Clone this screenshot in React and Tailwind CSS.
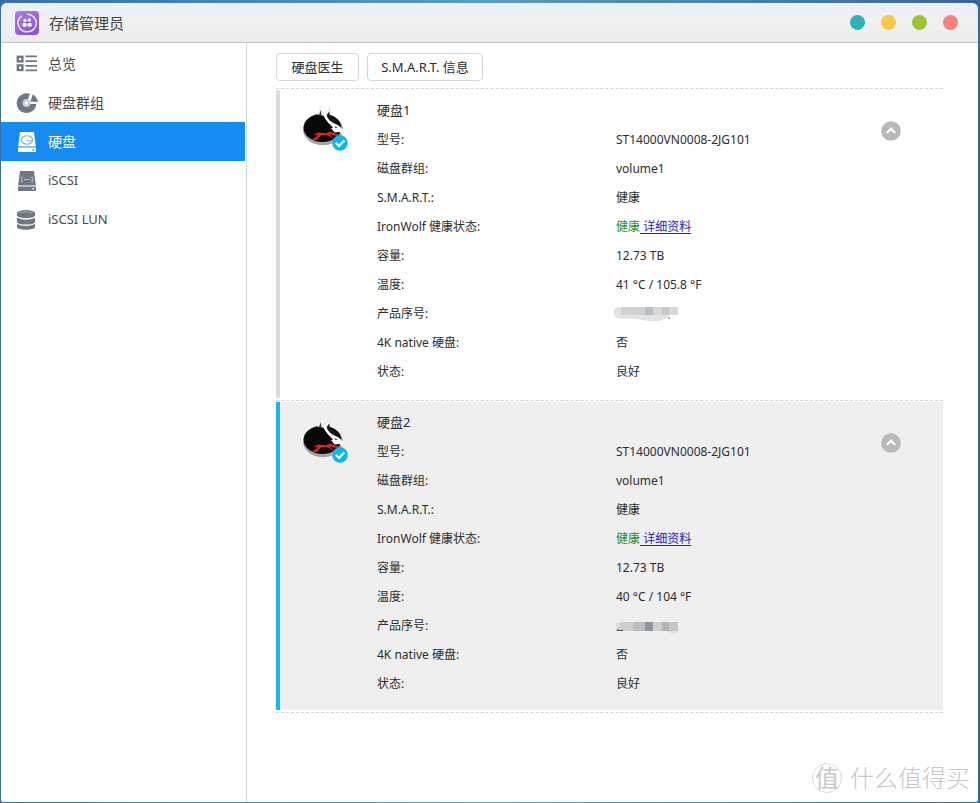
import React from "react";

const disks = [
  { name: "硬盘1", temperature: "41 °C / 105.8 °F", selected: false },
  { name: "硬盘2", temperature: "40 °C / 104 °F", selected: true },
];

function AppLogo() {
  return (
    <svg viewBox="0 0 24 24" className="size-6 shrink-0" aria-hidden="true">
      <defs>
        <linearGradient id="logo" x1="0" y1="0" x2="0.6" y2="1">
          <stop offset="0" stopColor="#b07be6" />
          <stop offset="1" stopColor="#8558d8" />
        </linearGradient>
      </defs>
      <rect width="24" height="24" rx="4" fill="url(#logo)" />
      <path d="M13 3.2 A8.8 8.8 0 0 1 12 20.8 A8.8 8.8 0 0 1 6.4 5.2" fill="none" stroke="#f1e4fd" strokeWidth="1.5" strokeLinecap="round" />
      <circle cx="10" cy="9.4" r="1.7" fill="#fff" />
      <circle cx="14.4" cy="9" r="1.7" fill="#fff" />
      <rect x="7.6" y="12" width="4" height="3.8" rx="1.2" fill="#fff" />
      <rect x="12.6" y="12" width="4" height="3.8" rx="1.2" fill="#fff" />
    </svg>
  );
}

function OverviewIcon() {
  return (
    <svg viewBox="0 0 22 20" className="w-[22px] h-5" fill="none" stroke="#6f7785" aria-hidden="true">
      <rect x="1.8" y="2.8" width="4.6" height="4.6" strokeWidth="2.4" />
      <rect x="1.8" y="11.4" width="4.6" height="4.6" strokeWidth="2.4" />
      <path d="M9.5 2.4H21M9.5 7.2H21M9.5 11.8H21M9.5 16.4H21" strokeWidth="1.7" />
    </svg>
  );
}

function GroupIcon() {
  return (
    <svg viewBox="0 0 22 20" className="w-[22px] h-5" aria-hidden="true">
      <path d="M14 1A9.8 9.8 0 1 0 20.3 11H14.2L11.8 6.2Z" fill="#6f7785" />
      <circle cx="10.4" cy="10" r="3.9" fill="#c9ccd1" />
      <circle cx="10.4" cy="10" r="1.7" fill="#fff" />
      <path d="M16.8 1.2 Q20.8 3.8 22 9 L14.4 8.4Z" fill="#6f7785" />
    </svg>
  );
}

function DiskIcon() {
  return (
    <svg viewBox="0 0 22 20" className="w-[22px] h-5" aria-hidden="true">
      <path d="M4 0H18L19.8 14.6H2.2Z" fill="#fff" />
      <rect x="2" y="15.6" width="18" height="4.4" rx=".6" fill="#fff" />
      <ellipse cx="11" cy="8" rx="5.6" ry="4.2" fill="none" stroke="#6db4f5" strokeWidth="1.1" />
      <path d="M11 8.8h5" stroke="#6db4f5" strokeWidth="1" />
      <circle cx="17.3" cy="17.8" r=".9" fill="#168bf2" />
    </svg>
  );
}

function IscsiIcon() {
  return (
    <svg viewBox="0 0 22 20" className="w-[22px] h-5" aria-hidden="true">
      <path d="M4 0H18L19.8 14.6H2.2Z" fill="#6f7785" />
      <rect x="2" y="15.4" width="18" height="4.6" rx=".6" fill="#6f7785" />
      <path d="M7.2 6.2H5.6v4.6h1.6M14.8 6.2h1.6v4.6h-1.6M8 8.5h6" fill="none" stroke="#b4b8be" strokeWidth="1.1" />
      <circle cx="17.3" cy="17.8" r=".9" fill="#fff" />
    </svg>
  );
}

function LunIcon() {
  return (
    <svg viewBox="0 0 22 20" className="w-[22px] h-5" fill="#6f7785" aria-hidden="true">
      <path d="M1 3.2v2.2c0 3.4 18 3.4 18 0V3.2Z" />
      <ellipse cx="10" cy="3" rx="9" ry="2.9" />
      <path d="M3.5 2.8Q10 .4 16.5 2.8" fill="none" stroke="#a9aeb6" strokeWidth=".9" />
      <path d="M1 7.8Q10 11.8 19 7.8v4.2c0 3.4-18 3.4-18 0Z" />
      <path d="M1 14Q10 18 19 14v3.1c0 3.6-18 3.6-18 0Z" />
    </svg>
  );
}

const sections = [
  { label: "总览", Icon: OverviewIcon },
  { label: "硬盘群组", Icon: GroupIcon },
  { label: "硬盘", Icon: DiskIcon, active: true },
  { label: "iSCSI", Icon: IscsiIcon, latin: true },
  { label: "iSCSI LUN", Icon: LunIcon, latin: true },
];

function WolfBadge() {
  return (
    <svg viewBox="0 0 48 48" className="size-12 shrink-0" role="img" aria-label="IronWolf">
      <ellipse cx="22" cy="26.6" rx="20" ry="15.6" fill="#a4a4a4" />
      <ellipse cx="21.4" cy="24.8" rx="18.8" ry="14.2" fill="#080808" />
      <path d="M16.5 11.5 L19.4 3.6 L21.4 9.4 L23.6 10.4 L28.6 4.6 L28.4 12 L26 13 Z" fill="#fff" stroke="#cfcfcf" strokeWidth=".5" />
      <path d="M17.8 13 L19.6 7 L20.6 12.4Z" fill="#333" />
      <path d="M25.4 12 L28.4 8.6 Q28 12 30 14 Q36 17 38 22 L31.4 19 Z" fill="#1a1a1a" />
      <path d="M21.4 9.6 L25.6 11.2 Q25.6 15.4 31 19.2 L37.6 22.4 L43 27.4 L41 31 L38.6 29 L33.6 29.4 L30 25.2 L32 24.4 Q24 18 21.4 9.6Z" fill="#fff" />
      <path d="M33.4 23.2 L37 24.6 L34.4 25Z" fill="#333" />
      <path d="M10.4 36.8 L17.4 32.4 L13 32 L17.4 29.6 L25 30.2 L29 28.4 L38 32 L41 35 L33 32.2 L28 31.6 L32.6 35.6 L25 31.8 L20 32.6 L15.6 37Z" fill="#e0242c" />
      <circle cx="39" cy="40" r="7.8" fill="#12b6e9" />
      <path d="M34.9 40 L38 43 L43.3 37.4" fill="none" stroke="#fff" strokeWidth="2.2" />
    </svg>
  );
}

function MaskedSerial({ dark }) {
  return dark ? (
    <svg viewBox="0 0 66 16" className="w-[66px] h-4 -ml-1" role="img" aria-label="序号已隐藏">
      <path d="M4 5h62v10H60L54 13H4Z" fill="#dcdddf" />
      <rect x="8" y="4" width="13" height="9" fill="#cdced0" />
      <rect x="21" y="4" width="12" height="9" fill="#bcbdc0" />
      <rect x="33" y="4" width="8" height="9" fill="#8f92a3" />
      <rect x="41" y="4" width="9" height="9" fill="#cdd0d1" />
      <rect x="50" y="4" width="7" height="9" fill="#b5b3b3" />
      <rect x="57" y="4" width="9" height="9" fill="#c4c7ca" />
      <path d="M5 12.5h6M7 10.5L5 12.5" stroke="#555" fill="none" />
    </svg>
  ) : (
    <svg viewBox="0 0 66 16" className="w-[66px] h-4 -ml-1" role="img" aria-label="序号已隐藏">
      <path d="M5 1H66V9H58Q52 15 44 15Q30 15 26 13L5 12Q-2 7 5 1Z" fill="#e2e3e5" />
      <rect x="9" y="1" width="24" height="8" fill="#cfd1d2" />
      <rect x="33" y="1" width="8" height="8" fill="#b9bdc0" />
      <rect x="41" y="1" width="9" height="8" fill="#d5d7da" />
      <rect x="50" y="1" width="7" height="8" fill="#cdc6c5" />
      <rect x="57" y="1" width="9" height="8" fill="#d6d8e2" />
      <circle cx="57" cy="12" r=".7" fill="#333" />
    </svg>
  );
}

function DiskCard({ disk }) {
  const rows = [
    ["型号:", "ST14000VN0008-2JG101"],
    ["磁盘群组:", "volume1"],
    ["S.M.A.R.T.:", "健康"],
    [
      "IronWolf 健康状态:",
      <>
        <span className="text-[#2c8f2c]">健康</span>
        <a href="#details" className="whitespace-pre text-[#2a20c8] underline underline-offset-2"> 详细资料</a>
      </>,
    ],
    ["容量:", "12.73 TB"],
    ["温度:", disk.temperature],
    ["产品序号:", <MaskedSerial dark={disk.selected} />],
    ["4K native 硬盘:", "否"],
    ["状态:", "良好"],
  ];
  return (
    <li className="border-b border-dashed border-[#d4d4d4] pt-px pb-0.5">
      <article
        className={
          disk.selected
            ? "flex border-l-4 border-[#1fb5f3] bg-[#efefef] pt-1.5 pb-3 pl-[21px]"
            : "flex border-l-4 border-[#dcdcdc] pt-1.5 pb-3 pl-[21px]"
        }
      >
        <div className="w-[76px] shrink-0 pt-[7px]">
          <WolfBadge />
        </div>
        <div className="min-w-0 flex-1">
          <h2 className="mb-px text-[13px] leading-7">{disk.name}</h2>
          <dl className="grid grid-cols-[239px_1fr] text-xs leading-[29px]">
            {rows.map(([label, value]) => (
              <React.Fragment key={label}>
                <dt>{label}</dt>
                <dd className="flex items-center">{value}</dd>
              </React.Fragment>
            ))}
          </dl>
        </div>
        <div className="w-[62px] shrink-0 pt-[25px]">
          <button type="button" aria-label={"收起 " + disk.name} className="block">
            <svg viewBox="0 0 20 20" className="size-5" aria-hidden="true">
              <circle cx="10" cy="10" r="9.8" fill="#b9b9b9" />
              <path d="M5.8 12 L10 7.8 L14.2 12" fill="none" stroke="#fff" strokeWidth="2.2" />
            </svg>
          </button>
        </div>
      </article>
    </li>
  );
}

export default function App() {
  return (
    <div className="flex h-screen flex-col bg-linear-to-r from-[#3a6eab] via-[#5d9cc0] to-[#3b6593] pt-[3px] pr-0.5 pb-px pl-px font-['Noto_Sans','Noto_Sans_CJK_SC',sans-serif] text-[#2d2d2d]">
      <div className="relative flex min-h-0 flex-1 flex-col overflow-hidden rounded-t-md rounded-b-xs bg-white">
        <header className="flex h-10 shrink-0 items-center border-b border-[#c4c4c4] bg-linear-to-b from-[#e9f0f8] via-[#f0f0f1] to-[#ececec] pr-5 pl-3.5">
          <AppLogo />
          <h1 className="ml-2.5 flex-1 text-[15px] leading-5 text-[#444]">存储管理员</h1>
          <div className="flex gap-4">
            <button type="button" aria-label="帮助" className="size-[15px] rounded-full bg-[#2cb3b5]" />
            <button type="button" aria-label="最小化" className="size-[15px] rounded-full bg-[#f9c74d]" />
            <button type="button" aria-label="最大化" className="size-[15px] rounded-full bg-[#a0c334]" />
            <button type="button" aria-label="关闭" className="size-[15px] rounded-full bg-[#f97f7f]" />
          </div>
        </header>
        <div className="flex min-h-0 flex-1">
          <nav className="w-[246px] shrink-0 border-r border-[#d4d6d8] pt-px pr-px">
            {sections.map(({ label, Icon, active, latin }) => (
              <a
                key={label}
                href="#section"
                aria-current={active ? "page" : undefined}
                className={
                  active
                    ? "flex h-[39px] items-center gap-2.5 bg-[#168bf2] pl-[15px] text-white"
                    : "flex h-[39px] items-center gap-2.5 pl-[15px] text-[#4a4a4a]"
                }
              >
                <Icon />
                <span className={latin ? "text-[13px]" : "text-sm"}>{label}</span>
              </a>
            ))}
          </nav>
          <main className="min-w-0 flex-1 pt-2.5 pr-[35px] pl-[29px]">
            <div className="flex gap-2">
              <button type="button" className="h-7 w-[83px] rounded-sm border border-[#d5d5d5] text-[13px] leading-4">硬盘医生</button>
              <button type="button" className="h-7 w-[116px] rounded-sm border border-[#d5d5d5] text-[13px] leading-4">S.M.A.R.T. 信息</button>
            </div>
            <ul className="mt-[7px] border-t border-dashed border-[#d4d4d4]">
              {disks.map((disk) => (
                <DiskCard key={disk.name} disk={disk} />
              ))}
            </ul>
          </main>
        </div>
        <div className="absolute right-2 bottom-2 flex items-center gap-2 text-[#c9c9c9]">
          <span className="flex size-[30px] items-center justify-center rounded-full border border-[#dadada] text-2xl">值</span>
          <span className="text-2xl font-light">什么值得买</span>
        </div>
      </div>
    </div>
  );
}
